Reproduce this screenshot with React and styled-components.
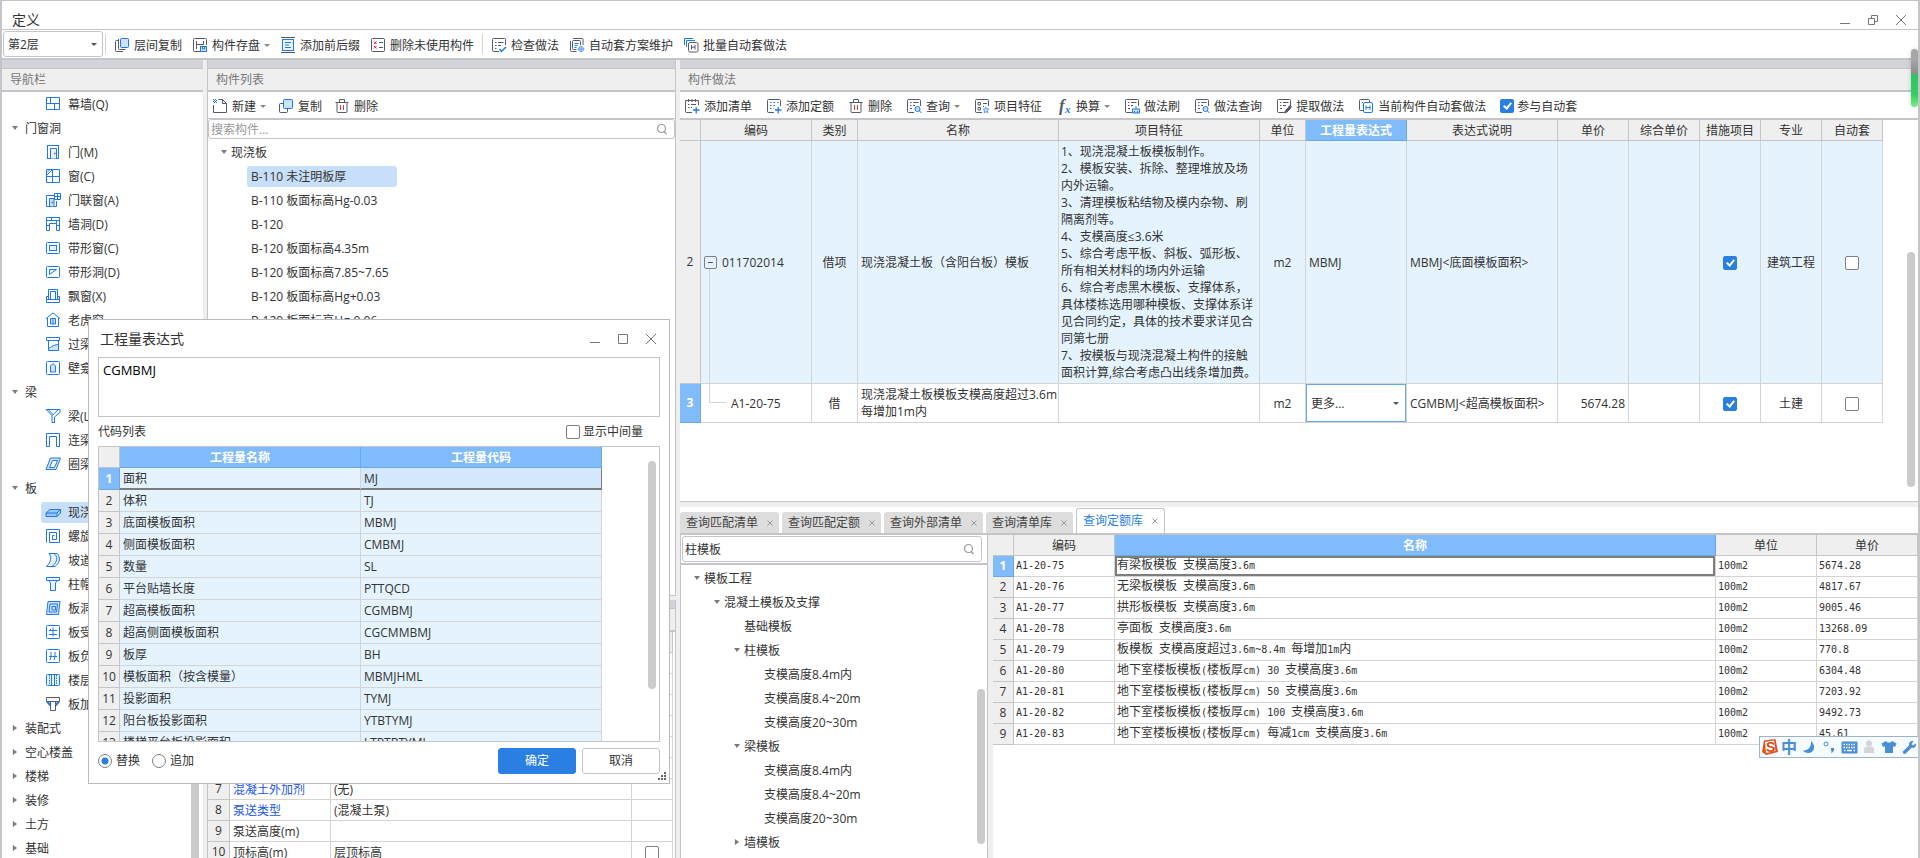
import React from "react";
import styled, { createGlobalStyle, css } from "styled-components";

const c = {
  line: "#c4c5c9",
  grid: "#d4d4d4",
  band: "#d3d4da",
  panel: "#efefef",
  text: "#333333",
  muted: "#777777",
  blue: "#2a7fe3",
  head: "#80bbfb",
  headLine: "#68a9ea",
  rowTint: "#e5f3fe",
  pick: "#c8dff9",
  thumb: "#cbcbcb",
};

const GlobalStyle = createGlobalStyle`
  *, *::before, *::after { box-sizing: border-box; }
  body {
    margin: 0;
    background: #fff;
    color: ${c.text};
    font-family: "Open Sans", "Noto Sans CJK SC", sans-serif;
    font-size: 12px;
    line-height: 17px;
  }
  button, input, select, textarea { font: inherit; color: inherit; }
`;

/* ---------- shell ---------- */

const Shell = styled.div`
  position: relative;
  display: flex;
  flex-direction: column;
  height: 100vh;
  border: solid ${c.line};
  border-width: 1px 2px 0 2px;
  overflow: hidden;
`;

const TitleBar = styled.header`
  display: flex;
  flex: none;
  align-items: center;
  justify-content: space-between;
  height: 29px;
  padding: 9px 11px 0 10px;
  border-bottom: 1px solid ${c.line};
`;

const WindowTitle = styled.h1`
  margin: 0;
  font-size: 14px;
  font-weight: 400;
  line-height: 20px;
`;

const WindowButtons = styled.div`
  display: flex;
  gap: ${(p) => p.$gap}px;
`;

const GlyphButton = styled.button`
  display: grid;
  place-items: center;
  padding: 0;
  border: 0;
  background: none;
  svg { display: block; }
`;

const MainToolbar = styled.div`
  display: flex;
  flex: none;
  align-items: center;
  height: 30px;
  padding-left: 1px;
  border-bottom: 2px solid ${c.line};
`;

const ToolGroup = styled.div`
  display: flex;
  align-items: center;
  gap: 10px;
  height: 20px;
  padding: 2px 8px 0;
  border-left: 1px solid ${c.grid};
`;

const PickerWrap = styled.div`
  position: relative;
  width: ${(p) => p.$width || "100%"};
  margin-right: ${(p) => (p.$width ? 2 : 0)}px;
  &::after {
    content: "";
    position: absolute;
    right: 6px;
    top: calc(50% - 1px);
    border: solid transparent;
    border-width: 3px 3px 0;
    border-top-color: #555;
    pointer-events: none;
  }
`;

const Picker = styled.select`
  display: block;
  appearance: none;
  width: 100%;
  height: ${(p) => p.$height}px;
  padding: 0 4px;
  border: ${(p) => (p.$plain ? "0" : `1px solid ${c.line}`)};
  border-radius: 3px;
  background: #fff;
  outline: 0;
`;

const ToolButton = styled.button`
  display: flex;
  align-items: center;
  gap: 4px;
  padding: 0;
  border: 0;
  background: none;
  white-space: nowrap;
  svg { flex: none; overflow: visible; }
`;

const Caret = styled.span`
  width: 6px;
  height: 3px;
  margin-top: 1px;
  background: #8a8a8a;
  clip-path: polygon(0 0, 100% 0, 50% 100%);
`;

const Body = styled.main`
  display: grid;
  flex: 1;
  grid-template-columns: 201px 469px minmax(0, 1fr);
  column-gap: 4px;
  min-height: 0;
  background: ${c.panel};
`;

const Column = styled.div`
  display: flex;
  flex-direction: column;
  gap: ${(p) => p.$gap || 0}px;
  min-width: 0;
  min-height: 0;
`;

const Panel = styled.section`
  position: relative;
  display: flex;
  flex-direction: column;
  flex: ${(p) => p.$flex || "1"};
  min-height: 0;
  background: #fff;
  border: solid ${c.line};
  border-width: 0 ${(p) => (p.$edge ? 1 : 0)}px ${(p) => (p.$bottom ? 1 : 0)}px ${(p) => (p.$edge ? 1 : 0)}px;
  overflow: hidden;
`;

const PanelHead = styled.h2`
  flex: none;
  height: 32px;
  margin: 0;
  padding: 2px 8px 0;
  border-top: 8px solid ${c.band};
  border-bottom: 2px solid ${c.line};
  box-shadow: inset 0 1px ${c.line};
  background: ${c.panel};
  color: ${c.muted};
  font-size: 12px;
  font-weight: 400;
  line-height: 20px;
`;

const PanelTools = styled.div`
  display: flex;
  flex: none;
  align-items: center;
  gap: ${(p) => p.$gap}px;
  height: ${(p) => 26 + p.$rule}px;
  padding: 2px 4px 0;
  border-bottom: ${(p) => p.$rule}px solid ${c.line};
`;

const Thumb = styled.div`
  position: absolute;
  right: ${(p) => p.$right}px;
  top: ${(p) => p.$top}px;
  bottom: ${(p) => p.$bottom}px;
  width: 8px;
  border-radius: 4px;
  background: ${c.thumb};
`;

/* ---------- trees ---------- */

const TreeList = styled.ul`
  flex: 1;
  min-height: 0;
  margin: 0;
  padding: ${(p) => p.$top || 0}px 0 0;
  list-style: none;
  overflow: hidden;
`;

const TreeItem = styled.li`
  display: flex;
  align-items: center;
  height: 24px;
  padding-left: ${(p) => p.$indent}px;
  white-space: nowrap;
`;

const TreeLabel = styled.span`
  display: flex;
  align-items: center;
  gap: 7px;
  height: 21px;
  padding: 0 4px;
  border-radius: 3px;
  ${(p) => p.$picked && css`
    min-width: ${p.$wide}px;
    background: ${c.pick};
  `}
`;

const Twist = styled.span`
  flex: none;
  width: 6px;
  height: 6px;
  margin-right: ${(p) => p.$space || 0}px;
  background: #7c7c7c;
  clip-path: ${(p) => (p.$open ? "polygon(0 15%, 100% 15%, 50% 85%)" : "polygon(15% 0, 85% 50%, 15% 100%)")};
`;

/* ---------- form bits ---------- */

const SearchBox = styled.label`
  display: flex;
  flex: none;
  align-items: center;
  height: ${(p) => p.$height}px;
  margin: ${(p) => p.$margin};
  padding: 0 6px 0 2px;
  border: 1px solid ${c.line};
  border-radius: 3px;
  input {
    flex: 1;
    min-width: 0;
    padding: 0;
    border: 0;
    outline: 0;
    background: none;
  }
  input::placeholder { color: #999; opacity: 1; }
`;

const Check = styled.input.attrs({ type: "checkbox" })`
  position: relative;
  flex: none;
  appearance: none;
  width: 14px;
  height: 14px;
  margin: 0;
  border: 1px solid #808080;
  border-radius: 2px;
  background: #fff;
  vertical-align: middle;
  &:checked {
    border-color: ${c.blue};
    background: ${c.blue};
  }
  &:checked::after {
    content: "";
    position: absolute;
    left: 4px;
    top: 1px;
    width: 5px;
    height: 8px;
    border: solid #fff;
    border-width: 0 2px 2px 0;
    transform: rotate(40deg);
  }
`;

const Radio = styled.input.attrs({ type: "radio" })`
  appearance: none;
  width: 14px;
  height: 14px;
  margin: 0;
  border: 1px solid #808080;
  border-radius: 50%;
  background: #fff;
  &:checked {
    background: radial-gradient(${c.blue} 0 3px, #fff 4px);
  }
`;

const Field = styled.label`
  display: flex;
  align-items: center;
  gap: ${(p) => p.$gap || 3}px;
  white-space: nowrap;
`;

/* ---------- tables ---------- */

const Table = styled.table`
  flex: none;
  width: ${(p) => p.$width || "100%"};
  table-layout: fixed;
  border-collapse: separate;
  border-spacing: 0;
`;

const Th = styled.th`
  height: 21px;
  padding: 0;
  border: solid ${c.line};
  border-width: 0 1px 1px 0;
  background: ${c.panel};
  font-weight: 400;
  text-align: center;
  ${(p) => p.$on && css`
    border-color: ${c.headLine};
    background: ${c.head};
    color: #fff;
    font-weight: 700;
  `}
`;

const Num = styled(Th).attrs({ scope: "row" })`
  height: ${(p) => p.$height || 21}px;
  line-height: 14px;
`;

const Td = styled.td`
  position: relative;
  height: ${(p) => p.$height || 21}px;
  padding: ${(p) => p.$pad || "0 3px"};
  border: solid ${c.grid};
  border-width: 0 1px 1px 0;
  background: ${(p) => (p.$tint ? c.rowTint : "#fff")};
  text-align: ${(p) => p.$align || "left"};
  white-space: pre;
  line-height: 17px;
  ${(p) => p.$ring && css`
    box-shadow: inset 0 0 0 1px ${c.headLine};
  `}
  ${(p) => p.$cursor === "box" && css`
    box-shadow: inset 0 0 0 2px #7d7d7d;
  `}
  ${(p) => p.$cursor === "start" && css`
    border-bottom: 2px solid #7d7d7d;
  `}
  ${(p) => p.$cursor === "end" && css`
    border-bottom: 2px solid #7d7d7d;
    border-right-color: #7d7d7d;
    background: #d5e9fe;
  `}
`;

const CodeCell = styled.div`
  display: flex;
  align-items: center;
  gap: 5px;
  padding-left: ${(p) => (p.$child ? 27 : 0)}px;
  &::before {
    content: "";
    position: absolute;
    left: 8px;
    border-left: 1px solid ${c.grid};
    ${(p) => (p.$child
      ? css`top: 0; height: 19px; width: 17px; border-bottom: 1px solid ${c.grid};`
      : css`top: calc(50% + 7px); bottom: 0;`)}
  }
`;

const Fold = styled.button`
  width: 13px;
  height: 13px;
  padding: 0;
  border: 1px solid #808080;
  border-radius: 2px;
  background: linear-gradient(#555, #555) center / 5px 1px no-repeat;
`;

const Latin = styled.span`
  font-family: "DejaVu Sans Mono", monospace;
  font-size: 10px;
`;

const PropLink = styled.a`
  color: #1a56f0;
  text-decoration: none;
`;

/* ---------- query area ---------- */

const TabBar = styled.div`
  display: flex;
  flex: none;
  align-items: flex-end;
  gap: 3px;
  height: 28px;
  border-bottom: 2px solid ${c.line};
`;

const Tab = styled.div`
  display: flex;
  align-items: center;
  gap: 9px;
  height: ${(p) => (p.$on ? 25 : 21)}px;
  padding: 0 6px;
  border-radius: 3px 3px 0 0;
  background: ${(p) => (p.$on ? "#fff" : "#dddddd")};
  border: solid ${c.line};
  border-width: ${(p) => (p.$on ? "1px 1px 0" : "0")};
  button {
    padding: 0;
    border: 0;
    background: none;
    line-height: 16px;
    color: ${(p) => (p.$on ? c.blue : "#444")};
  }
`;

const QueryBody = styled.div`
  display: grid;
  flex: 1;
  grid-template-columns: 308px minmax(0, 1fr);
  column-gap: 5px;
  min-height: 0;
  background: ${c.panel};
`;

const SearchRow = styled.div`
  flex: none;
  padding-top: 1px;
  border-bottom: 2px solid ${c.line};
`;

/* ---------- dialog ---------- */

const Dialog = styled.section`
  position: absolute;
  left: 86px;
  top: 318px;
  display: flex;
  flex-direction: column;
  width: 582px;
  height: 465px;
  padding: 0 9px;
  border: 1px solid #b9babd;
  background: #fff;
`;

const DialogTitle = styled.div`
  display: flex;
  align-items: center;
  justify-content: space-between;
  flex: none;
  height: 37px;
  padding: 0 3px 0 2px;
  h2 { margin: 0; font-size: 14px; font-weight: 400; line-height: 20px; }
`;

const Expression = styled.textarea`
  display: block;
  flex: none;
  width: 100%;
  height: 60px;
  padding: 4px;
  border: 1px solid ${c.line};
  outline: 0;
  resize: none;
  font-size: 13px;
  color: #000;
`;

const DialogRow = styled.div`
  display: flex;
  flex: none;
  align-items: center;
  justify-content: space-between;
  height: 29px;
  padding-right: 17px;
`;

const CodeList = styled.div`
  position: relative;
  flex: 1;
  min-height: 0;
  border: 1px solid ${c.line};
  overflow: hidden;
`;

const DialogFoot = styled.div`
  display: flex;
  flex: none;
  align-items: center;
  gap: 12px;
  height: 41px;
  padding-bottom: 4px;
`;

const Push = styled.button`
  width: 78px;
  height: 26px;
  padding: 0;
  border: 1px solid ${(p) => (p.$primary ? c.blue : c.line)};
  border-radius: 3px;
  background: ${(p) => (p.$primary ? c.blue : "#fff")};
  color: ${(p) => (p.$primary ? "#fff" : c.text)};
`;

const Actions = styled.div`
  display: flex;
  gap: 6px;
  margin-left: auto;
`;

const Grip = styled.svg`
  position: absolute;
  right: 3px;
  bottom: 3px;
`;

const VolumeMeter = styled.div`
  position: absolute;
  right: 0;
  top: 48px;
  width: 7px;
  height: 58px;
  border-radius: 4px;
  background: linear-gradient(#a6a6a6 0 10px, #8d8d8d 25px, #2bc465 25px, #35cd63 45px, #76ef80);
  box-shadow: 0 0 5px rgba(0, 0, 0, 0.18);
`;

const ImeBar = styled.div`
  position: absolute;
  right: -2px;
  top: 735px;
  display: flex;
  align-items: center;
  gap: 4px;
  height: 22px;
  width: 161px;
  padding-left: 1px;
  border: 1px solid #9fb4c2;
  border-right: 0;
  background: #f6fbff;
  ${GlyphButton} {
    flex: none;
    width: 16px;
    color: #4a8fd4;
    font-size: 16px;
    font-weight: 700;
    line-height: 20px;
  }
`;

/* ---------- icons ---------- */

const D = "#565b6c";
const B = "#1f78e6";
const L = "#cfe2fb";

const Icon = ({ children, size = 16, color = D }) => (
  <svg width={size} height={size} viewBox="0 0 16 16" fill="none" stroke={color} aria-hidden="true">
    {children}
  </svg>
);

const notched = "M14.500 8V2.500a1 1 0 0 0-1-1H2.500a1 1 0 0 0-1 1v11a1 1 0 0 0 1 1H8";

const icons = {
  layers: <><path d="M4 3.500H2.500a1 1 0 0 0-1 1v9a1 1 0 0 0 1 1H9" /><path d="M4.500 2v9.500a1 1 0 0 0 1 1H11.500" /><rect x="6.500" y="1.500" width="8" height="9" rx="1" stroke={B} fill={L} /></>,
  save: <><path d={notched} /><path d="M4.500 4v8M4.500 7.500H11.500M11.500 4v3.500" /><rect x="8.500" y="9.500" width="6" height="5" stroke={B} fill={L} /><path d="M10.500 10v2h2V10" stroke={B} /></>,
  affix: <><path d="M1 .5h14M1 15.500h14" /><rect x="2.500" y="2.500" width="11" height="11" stroke={B} fill="#eef5ff" /><path d="M5 5.500h6M5 8h4M5 10.500h6" stroke={B} /></>,
  unused: <><rect x="1.500" y="1.500" width="13" height="13" rx="1" /><path d="M4 4.500l2.500 2.500M6.500 4.500L4 7M4 9l2.500 2.500M6.500 9L4 11.500" stroke="#d9252b" /><path d="M9 5.500h4M9 10.500h4" /></>,
  verify: <><path d={notched} /><path d="M4 5.500h1.500M7 5.500h5.500M4 8.500h1.500M7 8.500h3M4 11.500h1.500" /><path d="M8.500 12l2 2.500 4.500-4.500" stroke={B} strokeWidth="1.500" /></>,
  scheme: <><path d="M4 1.500h9a1 1 0 0 1 1 1V8M1.500 4v9.500a1 1 0 0 0 1 1h5" /><path d="M11.500 8V4.500a1 1 0 0 0-1-1h-6a1 1 0 0 0-1 1v7a1 1 0 0 0 1 1h3" /><path d="M5.500 6.500h4M5.500 8.500h3M5.500 10.500h2" stroke={B} /><circle cx="12" cy="12" r="2.500" stroke="#6ba4ec" fill={L} /><path d="M12 8.500v7M8.500 12h7" stroke="#6ba4ec" /></>,
  batch: <><path d="M1.500 8V1.500H10M3.500 10V3.500H12" stroke={B} /><rect x="5.500" y="5.500" width="9.500" height="9.500" rx="1.500" fill="#fff" /><path d="M8.500 8v4.500M12 8v4.500M8.500 10.200H12" /></>,
  fresh: <><path d="M6.500 1.500H10.500l4 4v9h-13V7M10.500 1.500V5.500h4" /><path d="M1 1.500h4M2 2.500h4M1 3.500h4M2 4.500h4" stroke={B} strokeDasharray="1 1" /></>,
  copy: <><path d="M5 5.500H2.500a1 1 0 0 0-1 1v7a1 1 0 0 0 1 1h6a1 1 0 0 0 1-1V11" /><rect x="5.500" y="1.500" width="9" height="9" rx="1" stroke={B} fill={L} /></>,
  trash: <><path d="M1.500 4.500h13M5.500 4V1.500h5V4M3 4.500v9a1 1 0 0 0 1 1h8a1 1 0 0 0 1-1v-9" /><path d="M6.500 7v5M9.500 7v5" stroke="#e03a3a" /></>,
  addList: <><path d="M14.500 7V2.500H1.500v11a1 1 0 0 0 1 1H8M4.500 1v3M8 1v3M11.500 1v3M4 6.500h1.500M7 6.500h5M4 9.500h1.500M7 9.500h1" /><path d="M9 12h6.500M12.200 9v6.500" stroke={B} strokeWidth="1.300" /></>,
  addQuota: <><path d={notched} /><path d="M4 4.500h9M4 7.500h7M4 10.500h4" stroke={B} strokeDasharray="1.500 2" /><path d="M9 12h6.500M12.200 9v6.500" stroke={B} strokeWidth="1.300" /></>,
  query: <><path d={notched} /><path d="M4 4.500h1.500M7 4.500h5.500M4 7.500h1.500M7 7.500h2M4 10.500h2" /><circle cx="11.500" cy="11" r="2.500" stroke={B} fill={L} /><path d="M13.500 13l2 2" stroke={B} /></>,
  feature: <><path d={notched} /><path d="M4 4.500h2.500V7H4zM4 9.500h2.500V12H4zM9 5.500h4M9 8.500h1" /><path d="M12 9l.9 2 2.100.2-1.600 1.500.5 2.100-1.900-1.100-1.900 1.100.5-2.100L9 11.200l2.100-.2z" stroke="#5d9df0" fill={L} /></>,
  brush: <><path d={notched} /><path d="M4 4.500h1.500M7 4.500h5.500M4 7.500h1.500M7 7.500h2M4 10.500h2" /><path d="M8.500 15v-4h7v4zM12 8v3M10.500 13v2M13.500 13v2" stroke={B} fill={L} /></>,
  extract: <><path d={notched} /><path d="M4 4.500h1.500M7 4.500h5.500M4 7.500h1.500M7 7.500h3M4 10.500h2" /><path d="M8.500 15l1-2.500 3.500-3.500 1.500 1.500-3.500 3.500zM12.500 8.500l2-1 .8.800-1 2" fill={D} /></>,
  current: <><path d="M5 12.500H2.500a1 1 0 0 1-1-1V2.500a1 1 0 0 1 1-1h8a1 1 0 0 1 1 1V4M4 4.500h1M4 7.500h.5" /><rect x="5.500" y="4.500" width="9" height="10" rx="1.500" stroke={B} fill="#fff" /><path d="M8 7.500v4.500M12 7.500v4.500M8 9.500h4" stroke={B} /></>,
  func: (
    <g stroke="none" fontFamily="Liberation Serif, serif" fontStyle="italic" fontWeight="700">
      <text x="3" y="13" fontSize="17" fill={D}>f</text>
      <text x="9" y="15" fontSize="11" fill={B}>x</text>
    </g>
  ),
};

const navIcons = {
  curtain: <path d="M1.500 1.500h13v12h-13zM1.500 7.500h13M5.500 1.500v6M9.500 7.500v6" />,
  door: <><rect x="2.500" y="1.500" width="11" height="13" /><path d="M5.500 14.500V4.500h6v10" fill="#eaf3ff" /><path d="M9 9.500h1.500" strokeWidth="1.500" /></>,
  window: <><path d="M1.500 1.500h13v13h-13zM7.500 1.500v13M1.500 8.500h13" /><path d="M2 7l5-5M2 4.500L4.500 2" /></>,
  doorWindow: <><path d="M9 3.500H1.500v11H11.500V9" /><path d="M4.500 14V6.500h4.500v8" fill={L} /><path d="M9.500 1.500h6v6h-6zM12.500 1.500v6M9.500 4.500h6" fill="#fff" /><path d="M6.500 10.500h1.500" strokeWidth="1.500" /></>,
  wallHole: <path d="M1.500 14.500V1.500h13V14.500h-3V7.500h-7V14.500zM1.500 4.500h13M6.500 1.500v3M11.500 4.500v3M1.500 9.500h3M11.500 9.500h3" />,
  bandWindow: <><rect x="1.500" y="2.500" width="13" height="11" rx="1" /><rect x="4.500" y="5.500" width="7" height="5" fill="#eaf3ff" /></>,
  bandHole: <><rect x="1.500" y="2.500" width="13" height="11" rx="1" /><path d="M4.500 10.500V5.500h7z" fill="#eaf3ff" /></>,
  bay: <path d="M3.500 11.500V1.500h9V11.500M5.500 11.500V3.500h5V11.500M1.500 14.500v-3h13v3zM1.500 11.500V8.500h2M14.500 11.500V8.500h-2" />,
  dormer: <><path d="M1 6.500L8 1l7 5.500M2.500 6v8.500h11V6" /><path d="M5.500 12V6.500h5V12zM8 6.500V12" fill={L} /></>,
  lintel: <><path d="M1.500 1.500h13v3h-13zM3.500 4.500v10h10v-10" /><path d="M3.500 12c3 0 3-3 10-3.500v6H3.500z" fill={L} /></>,
  niche: <><rect x="1.500" y="1.500" width="13" height="13" rx="1" /><path d="M5.500 12V6L8 3.500 10.500 6v6z" fill={L} /></>,
  beam: <path d="M1 1.500h14v3L9.500 9v6M1 1.500l6 6v7h2.500M7 7.500L13 2M3 1.500l5 5" />,
  linkBeam: <path d="M1.500 14.500V1.500h13v13M4.500 14.500V4.500h7v10M1.500 14.500h3M11.500 14.500H14.500" />,
  ringBeam: <><path d="M1 13.500L5.500 2h10L11 13.500z" fill={L} /><path d="M4.500 11.500L7.500 4.500h5l-3 7z" fill="#fff" /></>,
  slab: <path d="M1 9l4-3.500h10.500L12 9zM1 9v3.500h11V9M12 12.500l3.500-3.500V5.500" fill="#9cc6f8" />,
  spiral: <path d="M1.500 14.500v-13h13v13H4.500V4.500h7v7H7.500V7.500h2" />,
  ramp: <path d="M4 1.500h5c4 3 4 8-2 13H1.500C6 10 7 5 4 1.500zM9 1.500h3c4 4 3 9-2 13H7" fill="#eaf3ff" />,
  cap: <path d="M1.500 1.500h13v3h-13zM3.500 4.500L5.500 7v7.500h5V7l2-2.500" fill="#eaf3ff" />,
  slabHole: <><path d="M3 1.500h12L13.500 14.500H1.500z" fill={L} /><path d="M5 4h7.500l-1 8H4zM7 6.500h3.500V10H7z" /></>,
  mainBar: <><rect x="1.500" y="1.500" width="13" height="13" rx="1" /><path d="M4 6.500h8M4 10.500h8M8 3.500v9M5.500 5v1M10.500 10v1" /></>,
  negBar: <><rect x="1.500" y="1.500" width="13" height="13" rx="1" /><path d="M6 4v5l-1 3M10 4v5l-1 3M4 8.500h8" /></>,
  strip: <><rect x="1.500" y="2.500" width="13" height="11" rx="1" fill="#eaf3ff" /><path d="M4.500 3v10M11.500 3v10" strokeDasharray="1.500 1" /><path d="M6.500 3v10M9.500 3v10" /></>,
  haunch: <><path d="M2 5.500L6 10M14 5.500L10 10" stroke={B} strokeWidth="2" /><path d="M1.500 1.500h13v4h-13zM5.500 5.500v9h5v-9" stroke={D} fill="#fff" /></>,
};

const Magnifier = () => (
  <svg width="12" height="12" viewBox="0 0 12 12" fill="none" stroke="#999" strokeWidth="1.200" aria-hidden="true">
    <circle cx="5.500" cy="5.500" r="4" />
    <path d="M8 8.500l2.500 2.500" />
  </svg>
);

const glyphs = {
  min: <path d="M1 9.500h10" />,
  max: <path d="M1.500 1.500h9v9h-9z" />,
  restore: <path d="M1.500 4.500h6v6h-6zM4.500 4V1.500h6v6H8" />,
  close: <path d="M1 1l10 10M11 1L1 11" />,
};

const Win = ({ kind, label }) => (
  <GlyphButton type="button" aria-label={label}>
    <svg width="12" height="12" viewBox="0 0 12 12" fill="none" stroke="#777">{glyphs[kind]}</svg>
  </GlyphButton>
);

const Tool = ({ icon, label, menu }) => (
  <ToolButton type="button">
    <Icon>{icons[icon]}</Icon>
    {label}
    {menu && <Caret />}
  </ToolButton>
);

/* ---------- data ---------- */

const nav = [
  ["curtain", "幕墙(Q)"], ["open", "门窗洞"], ["door", "门(M)"], ["window", "窗(C)"],
  ["doorWindow", "门联窗(A)"], ["wallHole", "墙洞(D)"], ["bandWindow", "带形窗(C)"],
  ["bandHole", "带形洞(D)"], ["bay", "飘窗(X)"], ["dormer", "老虎窗"], ["lintel", "过梁(G)"],
  ["niche", "壁龛(I)"], ["open", "梁"], ["beam", "梁(L)"], ["linkBeam", "连梁(G)"],
  ["ringBeam", "圈梁(E)"], ["open", "板"], ["slab", "现浇板(B)"], ["spiral", "螺旋板(B)"],
  ["ramp", "坡道(PD)"], ["cap", "柱帽(V)"], ["slabHole", "板洞(N)"], ["mainBar", "板受力筋(S)"],
  ["negBar", "板负筋(F)"], ["strip", "楼层板带(H)"], ["haunch", "板加腋(Y)"],
  ["shut", "装配式"], ["shut", "空心楼盖"], ["shut", "楼梯"], ["shut", "装修"],
  ["shut", "土方"], ["shut", "基础"],
];

const members = [
  "B-110 未注明板厚", "B-110 板面标高Hg-0.03", "B-120", "B-120 板面标高4.35m",
  "B-120 板面标高7.85~7.65", "B-120 板面标高Hg+0.03", "B-120 板面标高Hg-0.06",
];

const props = [
  ["1"], ["2"], ["3"], ["4"], ["5"], ["6"],
  ["7", "混凝土外加剂", "(无)", true],
  ["8", "泵送类型", "(混凝土泵)", true],
  ["9", "泵送高度(m)", ""],
  ["10", "顶标高(m)", "层顶标高", false, true],
];

const workCols = [
  ["", 21], ["编码", 111], ["类别", 46], ["名称", 201], ["项目特征", 201], ["单位", 46],
  ["工程量表达式", 101], ["表达式说明", 151], ["单价", 71], ["综合单价", 71],
  ["措施项目", 61], ["专业", 61], ["自动套", 61],
];

const featureText = [
  "1、现浇混凝土板模板制作。",
  "2、模板安装、拆除、整理堆放及场",
  "内外运输。",
  "3、清理模板粘结物及模内杂物、刷",
  "隔离剂等。",
  "4、支模高度≤3.6米",
  "5、综合考虑平板、斜板、弧形板、",
  "所有相关材料的场内外运输",
  "6、综合考虑黑木模板、支撑体系，",
  "具体楼栋选用哪种模板、支撑体系详",
  "见合同约定，具体的技术要求详见合",
  "同第七册",
  "7、按模板与现浇混凝土构件的接触",
  "面积计算,综合考虑凸出线条增加费。",
].join("\n");

const tabs = ["查询匹配清单", "查询匹配定额", "查询外部清单", "查询清单库", "查询定额库"];

const quotaTree = [
  [0, "模板工程", "open"], [1, "混凝土模板及支撑", "open"], [2, "基础模板"],
  [2, "柱模板", "open"], [3, "支模高度8.4m内"], [3, "支模高度8.4~20m"], [3, "支模高度20~30m"],
  [2, "梁模板", "open"], [3, "支模高度8.4m内"], [3, "支模高度8.4~20m"], [3, "支模高度20~30m"],
  [2, "墙模板", "shut"],
];

const quotas = [
  ["A1-20-75", "有梁板模板 支模高度3.6m", "5674.28"],
  ["A1-20-76", "无梁板模板 支模高度3.6m", "4817.67"],
  ["A1-20-77", "拱形板模板 支模高度3.6m", "9005.46"],
  ["A1-20-78", "亭面板 支模高度3.6m", "13268.09"],
  ["A1-20-79", "板模板 支模高度超过3.6m~8.4m 每增加1m内", "770.8"],
  ["A1-20-80", "地下室楼板模板(楼板厚cm) 30 支模高度3.6m", "6304.48"],
  ["A1-20-81", "地下室楼板模板(楼板厚cm) 50 支模高度3.6m", "7203.92"],
  ["A1-20-82", "地下室楼板模板(楼板厚cm) 100 支模高度3.6m", "9492.73"],
  ["A1-20-83", "地下室楼板模板(楼板厚cm) 每减1cm 支模高度3.6m", "45.61"],
];

const codes = [
  ["面积", "MJ"], ["体积", "TJ"], ["底面模板面积", "MBMJ"], ["侧面模板面积", "CMBMJ"],
  ["数量", "SL"], ["平台贴墙长度", "PTTQCD"], ["超高模板面积", "CGMBMJ"],
  ["超高侧面模板面积", "CGCMMBMJ"], ["板厚", "BH"], ["模板面积（按含模量）", "MBMJHML"],
  ["投影面积", "TYMJ"], ["阳台板投影面积", "YTBTYMJ"], ["楼梯平台板投影面积", "LTPTBTYMJ"],
];

// Sets the half-width runs of a catalogue entry in the monospaced face.
const Mixed = ({ children }) =>
  children.split(/([\x20-\x7e]+)/).map((run, i) => (i % 2 ? <Latin key={i}>{run}</Latin> : run));

/* ---------- views ---------- */

const NavPanel = () => (
  <Panel>
    <PanelHead>导航栏</PanelHead>
    <TreeList>
      {nav.map(([kind, label], i) => {
        const group = kind === "open" || kind === "shut";
        return (
          <TreeItem key={i} $indent={group ? 10 : 39}>
            {group && <Twist $open={kind === "open"} $space={3} />}
            <TreeLabel $picked={kind === "slab"} $wide={140}>
              {!group && <Icon color={B}>{navIcons[kind]}</Icon>}
              {label}
            </TreeLabel>
          </TreeItem>
        );
      })}
    </TreeList>
    <Thumb $right={4} $top={360} $bottom={-4} />
  </Panel>
);

const MemberPanels = () => (
  <Column $gap={4}>
    <Panel $edge $bottom>
      <PanelHead>构件列表</PanelHead>
      <PanelTools $gap={12} $rule={1}>
        <Tool icon="fresh" label="新建" menu />
        <Tool icon="copy" label="复制" />
        <Tool icon="trash" label="删除" />
      </PanelTools>
      <SearchBox $height={20} $margin="0 0 1px">
        <input type="search" aria-label="搜索构件" placeholder="搜索构件..." />
        <Magnifier />
      </SearchBox>
      <TreeList>
        <TreeItem $indent={13}>
          <Twist $open />
          <TreeLabel>现浇板</TreeLabel>
        </TreeItem>
        {members.map((m, i) => (
          <TreeItem key={m} $indent={39}>
            <TreeLabel $picked={i === 0} $wide={150}>{m}</TreeLabel>
          </TreeItem>
        ))}
      </TreeList>
    </Panel>
    <Panel $edge $flex="0 0 258px">
      <PanelHead>属性列表</PanelHead>
      <Table $width="465px">
        <colgroup><col width="22" /><col width="101" /><col width="301" /><col width="41" /></colgroup>
        <thead>
          <tr><Th /><Th>属性名称</Th><Th>属性值</Th><Th>附加</Th></tr>
        </thead>
        <tbody>
          {props.map(([n, name, value, link, extra]) => (
            <tr key={n}>
              <Num>{n}</Num>
              <Td>{link ? <PropLink href="#">{name}</PropLink> : name}</Td>
              <Td>{value}</Td>
              <Td $align="center">{extra && <Check aria-label={name} />}</Td>
            </tr>
          ))}
        </tbody>
      </Table>
    </Panel>
  </Column>
);

const WorkPanel = () => (
  <Panel $bottom>
    <PanelHead>构件做法</PanelHead>
    <PanelTools $gap={14} $rule={2}>
      <Tool icon="addList" label="添加清单" />
      <Tool icon="addQuota" label="添加定额" />
      <Tool icon="trash" label="删除" />
      <Tool icon="query" label="查询" menu />
      <Tool icon="feature" label="项目特征" />
      <Tool icon="func" label="换算" menu />
      <Tool icon="brush" label="做法刷" />
      <Tool icon="query" label="做法查询" />
      <Tool icon="extract" label="提取做法" />
      <Tool icon="current" label="当前构件自动套做法" />
      <Field><Check defaultChecked />参与自动套</Field>
    </PanelTools>
    <Table $width="1203px">
      <colgroup>{workCols.map(([n, w], i) => <col key={i} width={w} />)}</colgroup>
      <thead>
        <tr>{workCols.map(([n], i) => <Th key={i} scope="col" $on={i === 6}>{n}</Th>)}</tr>
      </thead>
      <tbody>
        <tr>
          <Num>2</Num>
          <Td $tint><CodeCell><Fold type="button" aria-label="折叠" />011702014</CodeCell></Td>
          <Td $tint $align="center">借项</Td>
          <Td $tint>现浇混凝土板（含阳台板）模板</Td>
          <Td $tint $pad="2px 2px">{featureText}</Td>
          <Td $tint $align="center">m2</Td>
          <Td $tint>MBMJ</Td>
          <Td $tint>MBMJ&lt;底面模板面积&gt;</Td>
          <Td $tint />
          <Td $tint />
          <Td $tint $align="center"><Check defaultChecked aria-label="措施项目" /></Td>
          <Td $tint $align="center">建筑工程</Td>
          <Td $tint $align="center"><Check aria-label="自动套" /></Td>
        </tr>
        <tr>
          <Num $on>3</Num>
          <Td $height={39}><CodeCell $child>A1-20-75</CodeCell></Td>
          <Td $align="center">借</Td>
          <Td>{"现浇混凝土板模板支模高度超过3.6m\n每增加1m内"}</Td>
          <Td />
          <Td $align="center">m2</Td>
          <Td $ring $pad="1px">
            <PickerWrap>
              <Picker $plain $height={35} aria-label="工程量表达式"><option>更多...</option></Picker>
            </PickerWrap>
          </Td>
          <Td>CGMBMJ&lt;超高模板面积&gt;</Td>
          <Td $align="right">5674.28</Td>
          <Td />
          <Td $align="center"><Check defaultChecked aria-label="措施项目" /></Td>
          <Td $align="center">土建</Td>
          <Td $align="center"><Check aria-label="自动套" /></Td>
        </tr>
      </tbody>
    </Table>
    <Thumb $right={3} $top={192} $bottom={14} />
  </Panel>
);

const QueryPanel = () => (
  <Panel $flex="0 0 351px">
    <TabBar>
      {tabs.map((t, i) => (
        <Tab key={t} $on={i === 4}>
          <button type="button">{t}</button>
          <GlyphButton type="button" aria-label="关闭">
            <svg width="6" height="6" viewBox="0 0 6 6" stroke="#999"><path d="M.5.500l5 5M5.500.500l-5 5" /></svg>
          </GlyphButton>
        </Tab>
      ))}
    </TabBar>
    <QueryBody>
      <Panel $edge>
        <SearchRow>
          <SearchBox $height={26} $margin="0 5px 1px 1px">
            <input type="search" aria-label="搜索定额" defaultValue="柱模板" />
            <Magnifier />
          </SearchBox>
        </SearchRow>
        <TreeList $top={1}>
          {quotaTree.map(([depth, label, state], i) => (
            <TreeItem key={i} $indent={13 + depth * 20 + (state ? 0 : 6)}>
              {state && <Twist $open={state === "open"} />}
              <TreeLabel>{label}</TreeLabel>
            </TreeItem>
          ))}
        </TreeList>
        <Thumb $right={2} $top={154} $bottom={14} />
      </Panel>
      <Panel>
        <Table>
          <colgroup><col width="21" /><col width="101" /><col /><col width="101" /><col width="101" /></colgroup>
          <thead>
            <tr>
              <Th /><Th scope="col">编码</Th><Th scope="col" $on>名称</Th>
              <Th scope="col">单位</Th><Th scope="col">单价</Th>
            </tr>
          </thead>
          <tbody>
            {quotas.map(([code, name, price], i) => (
              <tr key={code}>
                <Num $on={i === 0}>{i + 1}</Num>
                <Td $pad="0 2px 2px"><Mixed>{code}</Mixed></Td>
                <Td $pad="0 2px 2px" $cursor={i === 0 ? "box" : undefined}><Mixed>{name}</Mixed></Td>
                <Td $pad="0 2px 2px"><Mixed>100m2</Mixed></Td>
                <Td $pad="0 2px 2px"><Mixed>{price}</Mixed></Td>
              </tr>
            ))}
          </tbody>
        </Table>
      </Panel>
    </QueryBody>
  </Panel>
);

const ExpressionDialog = () => (
  <Dialog role="dialog" aria-labelledby="expression-title">
    <DialogTitle>
      <h2 id="expression-title">工程量表达式</h2>
      <WindowButtons $gap={16}>
        <Win kind="min" label="最小化" />
        <Win kind="max" label="最大化" />
        <Win kind="close" label="关闭" />
      </WindowButtons>
    </DialogTitle>
    <Expression aria-label="工程量表达式" defaultValue="CGMBMJ" />
    <DialogRow>
      代码列表
      <Field><Check />显示中间量</Field>
    </DialogRow>
    <CodeList>
      <Table $width="503px">
        <colgroup><col width="21" /><col width="241" /><col width="241" /></colgroup>
        <thead>
          <tr><Th /><Th scope="col" $on>工程量名称</Th><Th scope="col" $on>工程量代码</Th></tr>
        </thead>
        <tbody>
          {codes.map(([name, code], i) => (
            <tr key={code}>
              <Num $height={22} $on={i === 0}>{i + 1}</Num>
              <Td $tint $height={22} $cursor={i === 0 ? "start" : undefined}>{name}</Td>
              <Td $tint $height={22} $cursor={i === 0 ? "end" : undefined}>{code}</Td>
            </tr>
          ))}
        </tbody>
      </Table>
      <Thumb $right={3} $top={14} $bottom={52} />
    </CodeList>
    <DialogFoot>
      <Field $gap={4}><Radio name="mode" defaultChecked />替换</Field>
      <Field $gap={4}><Radio name="mode" />追加</Field>
      <Actions>
        <Push type="button" $primary>确定</Push>
        <Push type="button">取消</Push>
      </Actions>
    </DialogFoot>
    <Grip width="8" height="8" viewBox="0 0 8 8" fill="#666" aria-hidden="true">
      <path d="M6 0h2v2H6zM3 3h2v2H3zM6 3h2v2H6zM0 6h2v2H0zM3 6h2v2H3zM6 6h2v2H6z" />
    </Grip>
  </Dialog>
);

const Ime = () => (
  <ImeBar>
    <GlyphButton type="button" aria-label="输入法">
      <svg width="18" height="18" viewBox="0 0 18 18">
        <path d="M3 2.500L14.500 1 17 14 5 17 1 14z" fill="#e2521b" />
        <path d="M4 4l9-1.500L14.500 13 5 15z" fill="#fff" />
        <text x="5" y="14" fontSize="14" fontWeight="700" fontFamily="Liberation Sans, sans-serif" fill="#d9480f">S</text>
      </svg>
    </GlyphButton>
    <GlyphButton type="button">中</GlyphButton>
    <GlyphButton type="button" aria-label="半角">
      <svg width="14" height="14" viewBox="0 0 14 14"><path d="M9 1c5 4 4 12-3 12-2 0-4-1-5-2.500C6 11 9.500 7 9 1z" fill="currentColor" /></svg>
    </GlyphButton>
    <GlyphButton type="button" aria-label="中文标点">
      <svg width="14" height="14" viewBox="0 0 14 14">
        <circle cx="4" cy="4" r="2" fill="none" stroke="currentColor" />
        <path d="M9 8h3c.5 2-.5 4-3 5.500.8-1.500 1-2.500 0-3z" fill="currentColor" />
      </svg>
    </GlyphButton>
    <GlyphButton type="button" aria-label="软键盘">
      <svg width="17" height="13" viewBox="0 0 17 13">
        <rect x=".5" y=".5" width="16" height="12" rx="1" fill="currentColor" />
        <path d="M2.500 3.500h12M2.500 6.500h12" stroke="#fff" strokeWidth="1.500" strokeDasharray="1.500 1" />
        <path d="M3 9.500h1.500M6 9.500h5M12.500 9.500H14" stroke="#fff" strokeWidth="1.500" />
      </svg>
    </GlyphButton>
    <GlyphButton type="button" aria-label="用户">
      <svg width="12" height="14" viewBox="0 0 12 14" fill="#d3d5d7"><circle cx="6" cy="3.500" r="3" /><path d="M1 13V9.500C1 7 3 6.500 6 6.500s5 .5 5 3V13z" /></svg>
    </GlyphButton>
    <GlyphButton type="button" aria-label="皮肤">
      <svg width="16" height="14" viewBox="0 0 16 14"><path d="M5 1c1.500 2 4.500 2 6 0l4.500 2.500L14 7l-2-.8V13H4V6.200L2 7 .5 3.500z" fill="currentColor" /></svg>
    </GlyphButton>
    <GlyphButton type="button" aria-label="工具箱">
      <svg width="15" height="15" viewBox="0 0 15 15">
        <path d="M13.500 3.500L11 5.500 9.500 4l2-2.800C9 .3 6.500 2 7 5.500L1 11.300c-1 1.500 1 3.500 2.500 2.500l6-6C13 8.500 15 6 13.500 3.500z" fill="currentColor" />
      </svg>
    </GlyphButton>
  </ImeBar>
);

export default function App() {
  return (
    <>
      <GlobalStyle />
      <Shell>
        <TitleBar>
          <WindowTitle>定义</WindowTitle>
          <WindowButtons $gap={16}>
            <Win kind="min" label="最小化" />
            <Win kind="restore" label="还原" />
            <Win kind="close" label="关闭" />
          </WindowButtons>
        </TitleBar>
        <MainToolbar>
          <PickerWrap $width="100px">
            <Picker $height={26} aria-label="楼层"><option>第2层</option></Picker>
          </PickerWrap>
          <ToolGroup>
            <Tool icon="layers" label="层间复制" />
            <Tool icon="save" label="构件存盘" menu />
            <Tool icon="affix" label="添加前后缀" />
            <Tool icon="unused" label="删除未使用构件" />
          </ToolGroup>
          <ToolGroup>
            <Tool icon="verify" label="检查做法" />
            <Tool icon="scheme" label="自动套方案维护" />
            <Tool icon="batch" label="批量自动套做法" />
          </ToolGroup>
        </MainToolbar>
        <Body>
          <NavPanel />
          <MemberPanels />
          <Column $gap={5}>
            <WorkPanel />
            <QueryPanel />
          </Column>
        </Body>
        <ExpressionDialog />
        <VolumeMeter />
        <Ime />
      </Shell>
    </>
  );
}
